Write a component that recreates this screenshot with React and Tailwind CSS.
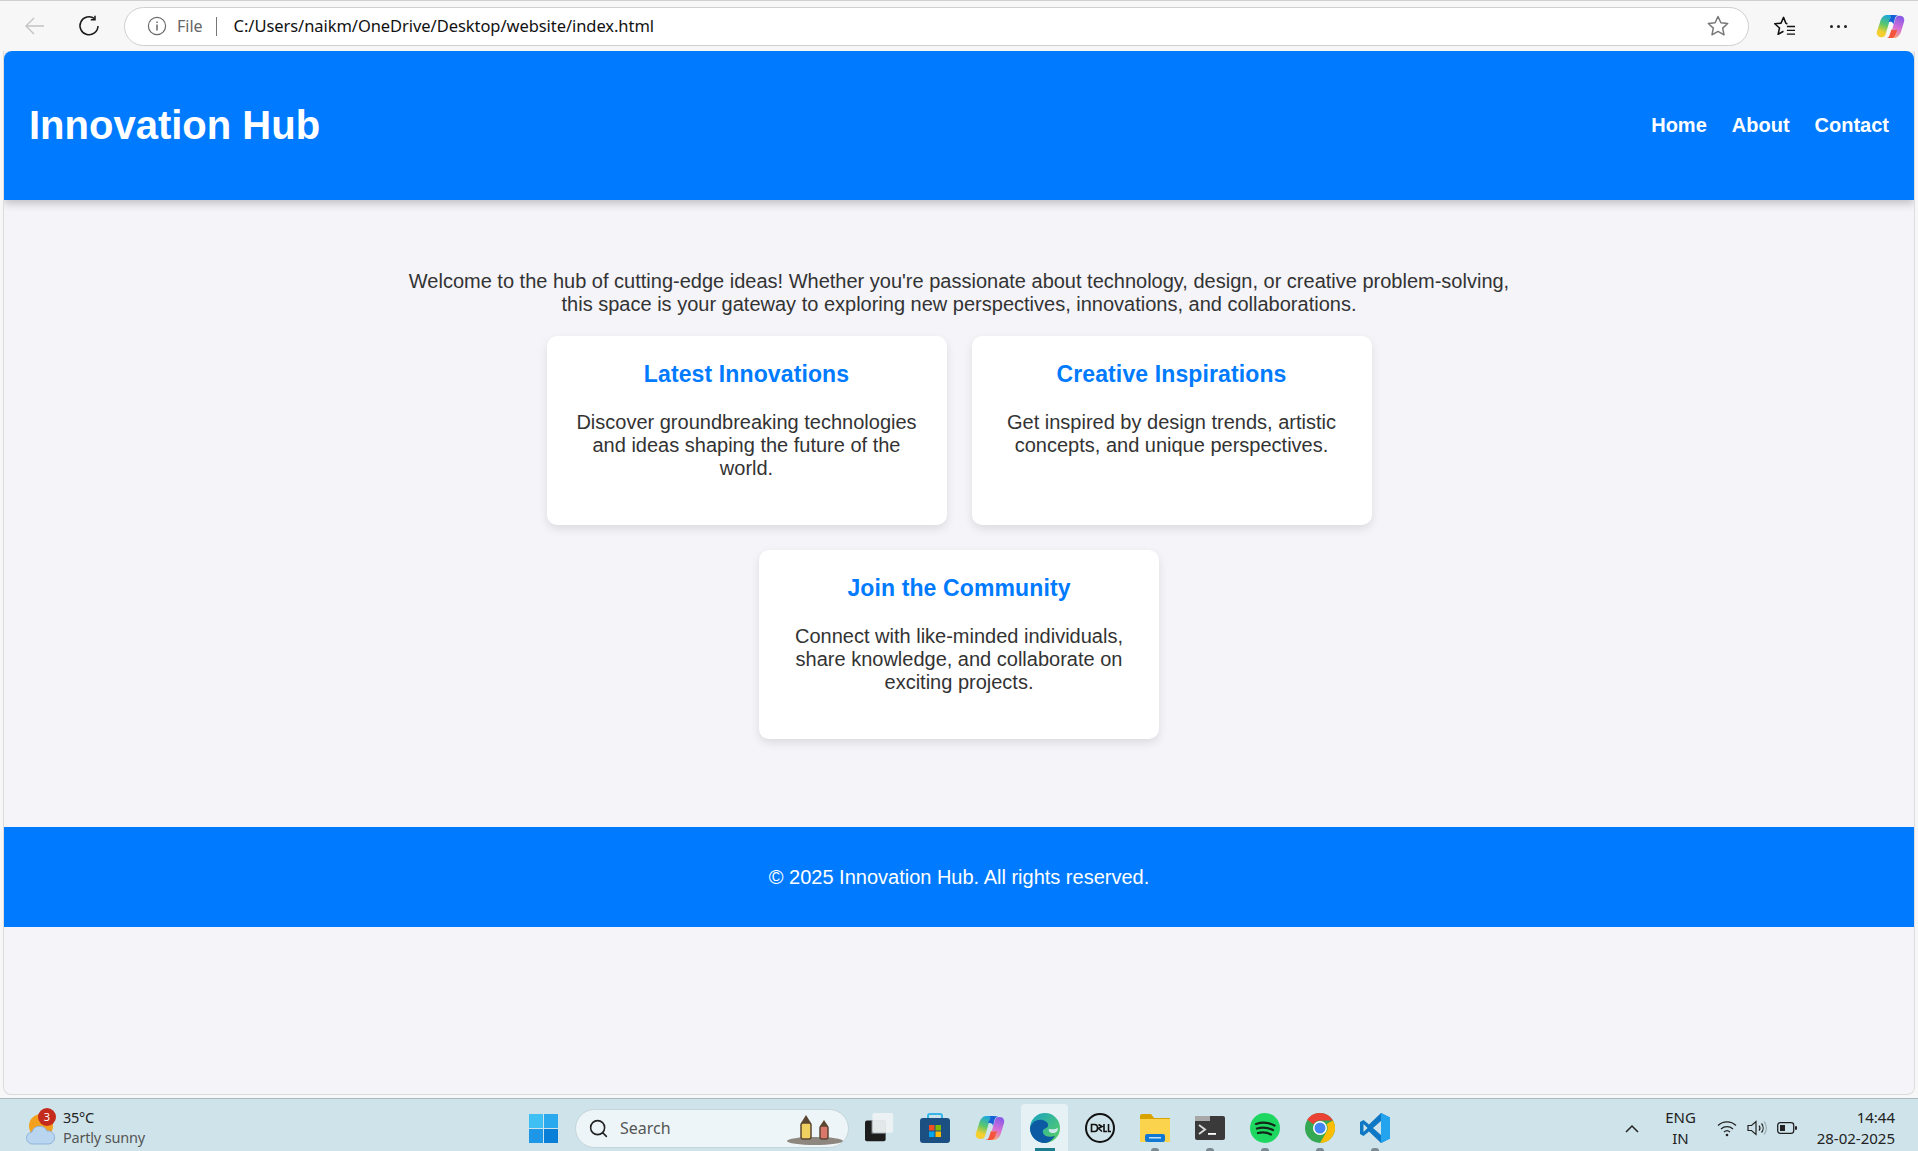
import { Search } from 'lucide-react';

const cards = [
  {
    title: 'Latest Innovations',
    text: 'Discover groundbreaking technologies and ideas shaping the future of the world.',
  },
  {
    title: 'Creative Inspirations',
    text: 'Get inspired by design trends, artistic concepts, and unique perspectives.',
  },
  {
    title: 'Join the Community',
    text: 'Connect with like-minded individuals, share knowledge, and collaborate on exciting projects.',
  },
];

function Card({ title, text }) {
  return (
    <div className="w-[400px] bg-white rounded-[10px] shadow-[0_4px_10px_rgba(0,0,0,0.1)] pt-[25px] pb-[45px] px-[25px] text-center">
      <h2 className="text-[23px] leading-[26px] font-bold text-[#007bff] tracking-[0.12px]">{title}</h2>
      <p className="mt-[24px] text-[20px] leading-[23px] text-[#333]">{text}</p>
    </div>
  );
}

function BrowserBar() {
  return (
    <div className="h-[51px] shrink-0 bg-[#f7f7f7] border-t border-[#d0d0d0] flex items-center pl-[24px] pr-[12px] font-['Noto_Sans',sans-serif]">
      <svg width="21" height="20" viewBox="0 0 21 20" fill="none" stroke="#c4c4c4" strokeWidth="1.4">
        <path d="M20 10H2M10 2l-8 8 8 8" />
      </svg>
      <svg className="ml-[33px]" width="22" height="22" viewBox="0 0 22 22" fill="none" stroke="#1a1a1a" strokeWidth="1.5">
        <path d="M16.5 3.6A9 9 0 1 0 20 11" />
        <path d="M17 0.8v4h-4.2" />
      </svg>
      <div className="ml-[24px] h-[39px] w-[1625px] bg-white border border-[#cfcfcf] rounded-full flex items-center pl-[22px] pr-[18px]">
        <svg width="20" height="20" viewBox="0 0 20 20" fill="none" stroke="#6a6a6a" strokeWidth="1.2">
          <circle cx="10" cy="10" r="8.6" />
          <path d="M10 8.6v6M10 5.4v1.6" strokeWidth="1.5" />
        </svg>
        <span className="ml-[10px] text-[16px] text-[#666]">File</span>
        <span className="ml-[13px] w-px h-[19px] bg-[#777]" />
        <span className="ml-[17px] text-[16.5px] text-[#111] tracking-[-0.06px]">C:/Users/naikm/OneDrive/Desktop/website/index.html</span>
        <svg className="ml-auto" width="24" height="24" viewBox="0 0 24 24" fill="none" stroke="#777" strokeWidth="1.5" strokeLinejoin="round">
          <path d="M12 2.5l2.9 6.2 6.8.8-5 4.6 1.3 6.7-6-3.4-6 3.4 1.3-6.7-5-4.6 6.8-.8z" />
        </svg>
      </div>
      <svg className="ml-[24px]" width="23" height="22" viewBox="0 0 24 23" fill="none" stroke="#111" strokeWidth="1.6" strokeLinejoin="round">
        <path d="M15 9.5l-1.6-1-2.4-6-2.6 6-6.6.7 5 4.400-1.500 6.600 5.600-3.200" />
        <path d="M14.500 12H23M14.500 16H23M14.500 20H23" strokeWidth="1.400" />
      </svg>
      <div className="ml-[34px] flex gap-[4px]">
        <span className="w-[3px] h-[3px] rounded-full bg-[#222]" />
        <span className="w-[3px] h-[3px] rounded-full bg-[#222]" />
        <span className="w-[3px] h-[3px] rounded-full bg-[#222]" />
      </div>
      <CopilotIcon className="ml-[29px]" size={29} id="top" />
    </div>
  );
}

function CopilotIcon({ className, size, id }) {
  return (
    <svg className={className} width={size} height={size} viewBox="0 0 30 30">
      <defs>
        <linearGradient id={`copA${id}`} x1="0.6" y1="0" x2="0.3" y2="1">
          <stop offset="0" stopColor="#19a6e0" />
          <stop offset="0.45" stopColor="#5cc86a" />
          <stop offset="0.8" stopColor="#f5cf2e" />
        </linearGradient>
        <linearGradient id={`copB${id}`} x1="0.6" y1="0" x2="0.3" y2="1">
          <stop offset="0" stopColor="#8a5be8" />
          <stop offset="0.5" stopColor="#d56fd6" />
          <stop offset="1" stopColor="#fbb26c" />
        </linearGradient>
      </defs>
      <path d="M11 3h8c-2 0-3 1-4 3l-5 17c-.5 2-2 3-4 3H5c-3 0-5-3-4-6l3-9C5 6 8 3 11 3z" fill={`url(#copA${id})`} />
      <path d="M19 27h-8c2 0 3-1 4-3l5-17c.5-2 2-3 4-3h1c3 0 5 3 4 6l-3 10c-1 4-4 7-7 7z" fill={`url(#copB${id})`} />
      <path d="M13 3h6c3 0 4 1 4 1-2 0-3 1-3.500 3L18 13c-.5-3-2-3-5-3l2-4c.5-1.500 1-3 -2-3z" fill="#1560d4" />
      <path d="M10 27h6c3 0 4-3 5-6l1-3c-2 1-4 1-6 0l-2 6c-.5 2-2 3-4 3z" fill="#f4553c" />
    </svg>
  );
}

function TaskIcon({ active, dot, children }) {
  return (
    <div className={`relative w-[47px] h-[47px] mx-[4px] rounded-t-[4px] flex items-center justify-center ${active ? 'bg-[#e6f1f5]' : ''}`}>
      {children}
      {dot && <span className="absolute bottom-0 left-[20px] w-[8px] h-[3px] rounded-t-full bg-[#7b8a90]" />}
      {active && <span className="absolute bottom-0 left-[14px] w-[20px] h-[3px] bg-[#1d7d8c]" />}
    </div>
  );
}

function Taskbar() {
  return (
    <div className="h-[53px] shrink-0 bg-[#cfe4ea] border-t border-[#a9b9be] flex items-center pt-[6px] font-['Noto_Sans',sans-serif] text-[#222]">
      <div className="w-[529px] shrink-0 flex items-center pl-[26px]">
        <div className="relative w-[30px] h-[36px] mt-[2px]">
          <svg width="30" height="36" viewBox="0 0 30 36">
            <circle cx="15" cy="15" r="12" fill="#f2a01e" />
            <path d="M7 33a6 6 0 0 1-1-12 8 8 0 0 1 15-1 6.500 6.500 0 0 1 2 13z" fill="#b9d5f0" stroke="#8fb3dc" strokeWidth="1" />
          </svg>
          <span className="absolute -top-[3px] left-[12px] w-[18px] h-[18px] rounded-full bg-[#c42b1c] text-white text-[11px] leading-[18px] text-center">3</span>
        </div>
        <div className="ml-[7px] -mt-[2px] text-[14.5px] leading-[20px]">
          <div className="tracking-[-0.3px]">35°C</div>
          <div className="text-[#555] tracking-[-0.2px]">Partly sunny</div>
        </div>
      </div>
      <svg width="29" height="29" viewBox="0 0 29 29" className="shrink-0">
        <rect x="0" y="0" width="14" height="14" fill="#3ec0f5" />
        <rect x="15" y="0" width="14" height="14" fill="#2aa9ef" />
        <rect x="0" y="15" width="14" height="14" fill="#1e97e8" />
        <rect x="15" y="15" width="14" height="14" fill="#0a7fd8" />
      </svg>
      <div className="ml-[17px] w-[274px] h-[39px] shrink-0 bg-[#eef5f8] border border-[#c3d5db] rounded-full flex items-center pl-[12px] relative">
        <Search size={21} strokeWidth={1.8} className="text-[#222]" />
        <span className="ml-[11px] text-[16px] text-[#555]">Search</span>
        <svg className="absolute right-[3px] bottom-[1px]" width="60" height="32" viewBox="0 0 60 32">
          <ellipse cx="30" cy="27" rx="28" ry="4" fill="#8e8780" />
          <rect x="16" y="9" width="10" height="16" rx="2" fill="#f0d060" stroke="#5b4632" strokeWidth="1.500" />
          <path d="M21 1l5 8H16z" fill="#5b4632" />
          <rect x="35" y="12" width="8" height="13" rx="2" fill="#d9776b" stroke="#5b4632" strokeWidth="1.500" />
          <path d="M39 6l4 6h-8z" fill="#5b4632" />
        </svg>
      </div>
      <div className="ml-[3px] flex items-center self-end">
        <TaskIcon>
          <svg width="30" height="30" viewBox="0 0 32 32">
            <rect x="0" y="8" width="22" height="22" rx="2" fill="#1d1d1d" />
            <rect x="7" y="8" width="15" height="14" fill="#8f9a9e" />
            <rect x="8" y="0" width="22" height="21" rx="2" fill="#f1f4f5" fillOpacity="0.85" />
          </svg>
        </TaskIcon>
        <TaskIcon>
          <svg width="30" height="30" viewBox="0 0 30 30">
            <path d="M8 6V3a2 2 0 0 1 2-2h10a2 2 0 0 1 2 2v3" fill="none" stroke="#35b6ea" strokeWidth="2" />
            <rect x="0" y="5" width="30" height="25" rx="3" fill="#1c4f82" />
            <rect x="9" y="12" width="5.500" height="5.500" fill="#f25022" />
            <rect x="15.500" y="12" width="5.500" height="5.500" fill="#7fba00" />
            <rect x="9" y="18.500" width="5.500" height="5.500" fill="#00a4ef" />
            <rect x="15.500" y="18.500" width="5.500" height="5.500" fill="#ffb900" />
          </svg>
        </TaskIcon>
        <TaskIcon>
          <CopilotIcon size={30} id="task" />
        </TaskIcon>
        <TaskIcon active>
          <svg width="30" height="30" viewBox="0 0 30 30">
            <defs>
              <linearGradient id="edgeA" x1="0" y1="0" x2="1" y2="1">
                <stop offset="0" stopColor="#16a1c4" />
                <stop offset="1" stopColor="#5fd35d" />
              </linearGradient>
            </defs>
            <circle cx="15" cy="15" r="15" fill="url(#edgeA)" />
            <path d="M0 15C2 7 10 5 15 8c4 2 4 6 1 7-2 1-4 2-3 5 1 3 6 5 12 3-3 4-6 7-10 7C6 30 0 23 0 15z" fill="#0c59a4" />
            <path d="M19 16c3 0 5 1 9-1 0 3-2 5-5 5-3 0-5-2-4-4z" fill="#cfe8ee" />
          </svg>
        </TaskIcon>
        <TaskIcon>
          <svg width="30" height="30" viewBox="0 0 30 30">
            <circle cx="15" cy="15" r="14" fill="none" stroke="#111" strokeWidth="2" />
            <path d="M6.500 11.500h3c2 0 3 1.500 3 3.500s-1 3.500-3 3.500h-3zM13.500 11.500l3.500 2-3.500 2 3.500 3M19 11v7.500h3M23.500 11v7.500h2.500" fill="none" stroke="#111" strokeWidth="1.600" />
          </svg>
        </TaskIcon>
        <TaskIcon dot>
          <svg width="30" height="28" viewBox="0 0 30 28">
            <path d="M0 2a2 2 0 0 1 2-2h9l3 4h16v24H0z" fill="#d9a200" />
            <rect x="0" y="5" width="30" height="23" fill="#fcd34d" />
            <rect x="5" y="20" width="20" height="8" rx="2" fill="#0f78d4" />
            <rect x="9" y="23" width="12" height="1.500" fill="#bfe3ff" />
          </svg>
        </TaskIcon>
        <TaskIcon dot>
          <svg width="30" height="24" viewBox="0 0 30 24">
            <rect x="0" y="0" width="30" height="24" rx="2" fill="#3a3a3a" />
            <rect x="0" y="0" width="15" height="5" fill="#a8a8a8" />
            <path d="M4 9l6 4.500-6 4.500" fill="none" stroke="#d8d8d8" strokeWidth="2" />
            <rect x="13" y="17" width="8" height="1.800" fill="#fff" />
          </svg>
        </TaskIcon>
        <TaskIcon dot>
          <svg width="30" height="30" viewBox="0 0 30 30">
            <circle cx="15" cy="15" r="15" fill="#1ed760" />
            <path d="M6 11c6-2 13-1.500 18.500 1.500M7 15.500c5-1.500 11-1 16 1.500M8 20c4-1 9-.8 13 1.500" fill="none" stroke="#14261a" strokeWidth="2.300" strokeLinecap="round" />
          </svg>
        </TaskIcon>
        <TaskIcon dot>
          <svg width="30" height="30" viewBox="0 0 30 30">
            <circle cx="15" cy="15" r="15" fill="#34a853" />
            <path d="M15 0a15 15 0 0 1 13 7.500H15a7.500 7.500 0 0 0-6.500 3.800L2.200 6.800A15 15 0 0 1 15 0z" fill="#ea4335" />
            <path d="M28 7.500A15 15 0 0 1 15 30l6.500-11.200A7.500 7.500 0 0 0 21.500 11z" fill="#fbbc04" />
            <circle cx="15" cy="15" r="7" fill="#fff" />
            <circle cx="15" cy="15" r="5.500" fill="#4285f4" />
          </svg>
        </TaskIcon>
        <TaskIcon dot>
          <svg width="30" height="30" viewBox="0 0 30 30">
            <path d="M21 0l9 4.500v21L21 30 9 18.500 3.500 23 0 21v-12l3.500-2L9 11.500z" fill="#0f78c4" />
            <path d="M21 0l9 4.500v21L21 30z" fill="#24a4ee" />
            <path d="M21 8v14l-8-7z" fill="#cfe4ea" />
            <path d="M3.500 11l4 4-4 4z" fill="#cfe4ea" />
          </svg>
        </TaskIcon>
      </div>
      <svg className="ml-[223px]" width="14" height="9" viewBox="0 0 14 9" fill="none" stroke="#222" strokeWidth="1.500">
        <path d="M1 8l6-6 6 6" />
      </svg>
      <div className="ml-[25px] w-[33px] text-[15px] leading-[21px] text-center">
        <div>ENG</div>
        <div>IN</div>
      </div>
      <svg className="ml-[20px]" width="20" height="18" viewBox="0 0 20 18" fill="none" stroke="#222" strokeWidth="1.300">
        <path d="M1 6.500a13 13 0 0 1 18 0M4 10a9 9 0 0 1 12 0M7 13a4.500 4.500 0 0 1 6 0" />
        <circle cx="10" cy="16" r="1.300" fill="#222" stroke="none" />
      </svg>
      <svg className="ml-[10px]" width="20" height="16" viewBox="0 0 20 16" fill="none" stroke="#222" strokeWidth="1.200">
        <path d="M1 5.500h3.500L9 1.500v13l-4.500-4H1z" />
        <path d="M12 5.500a4 4 0 0 1 0 5M14.500 3.500a7 7 0 0 1 0 9" />
        <path d="M17 1.500a10 10 0 0 1 0 13" stroke="#9fb0b5" />
      </svg>
      <svg className="ml-[10px]" width="20" height="12" viewBox="0 0 20 12" fill="none">
        <rect x="0.700" y="0.700" width="16" height="10.600" rx="2.500" stroke="#222" strokeWidth="1.300" />
        <rect x="3" y="3" width="5" height="6" fill="#222" />
        <rect x="18" y="4" width="2" height="4" rx="1" fill="#222" />
      </svg>
      <div className="ml-auto mr-[23px] text-[15px] leading-[21px] text-right">
        <div>14:44</div>
        <div>28-02-2025</div>
      </div>
    </div>
  );
}

export default function App() {
  return (
    <div className="h-[1151px] flex flex-col overflow-hidden bg-[#f7f7f7] font-['Liberation_Sans',Arial,sans-serif]">
      <BrowserBar />
      <div className="flex-1 mx-[3px] mb-[3px] bg-[#f4f4f9] border-x border-b border-[#dcdcdc] rounded-b-[8px] overflow-hidden">
        <header className="h-[149px] bg-[#007bff] rounded-t-[8px] shadow-[0_4px_8px_rgba(0,0,0,0.2)] flex items-center justify-between pb-[2px] px-[25px] text-white">
          <h1 className="text-[40px] leading-[46px] font-bold">Innovation Hub</h1>
          <nav className="flex gap-[25px] text-[20px] font-bold">
            <a href="#home">Home</a>
            <a href="#about">About</a>
            <a href="#contact">Contact</a>
          </nav>
        </header>
        <main className="h-[627px] pt-[70px]">
          <p className="w-[1130px] mx-auto text-center text-[20px] leading-[23px] text-[#333]">
            Welcome to the hub of cutting-edge ideas! Whether you're passionate about technology, design, or creative problem-solving, this space is your gateway to exploring new perspectives, innovations, and collaborations.
          </p>
          <div className="mt-[20px] flex flex-wrap justify-center gap-[25px] w-[900px] mx-auto">
            {cards.map((c) => (
              <Card key={c.title} title={c.title} text={c.text} />
            ))}
          </div>
        </main>
        <footer className="h-[100px] bg-[#007bff] text-white text-[20px] flex items-center justify-center">
          © 2025 Innovation Hub. All rights reserved.
        </footer>
      </div>
      <Taskbar />
    </div>
  );
}
